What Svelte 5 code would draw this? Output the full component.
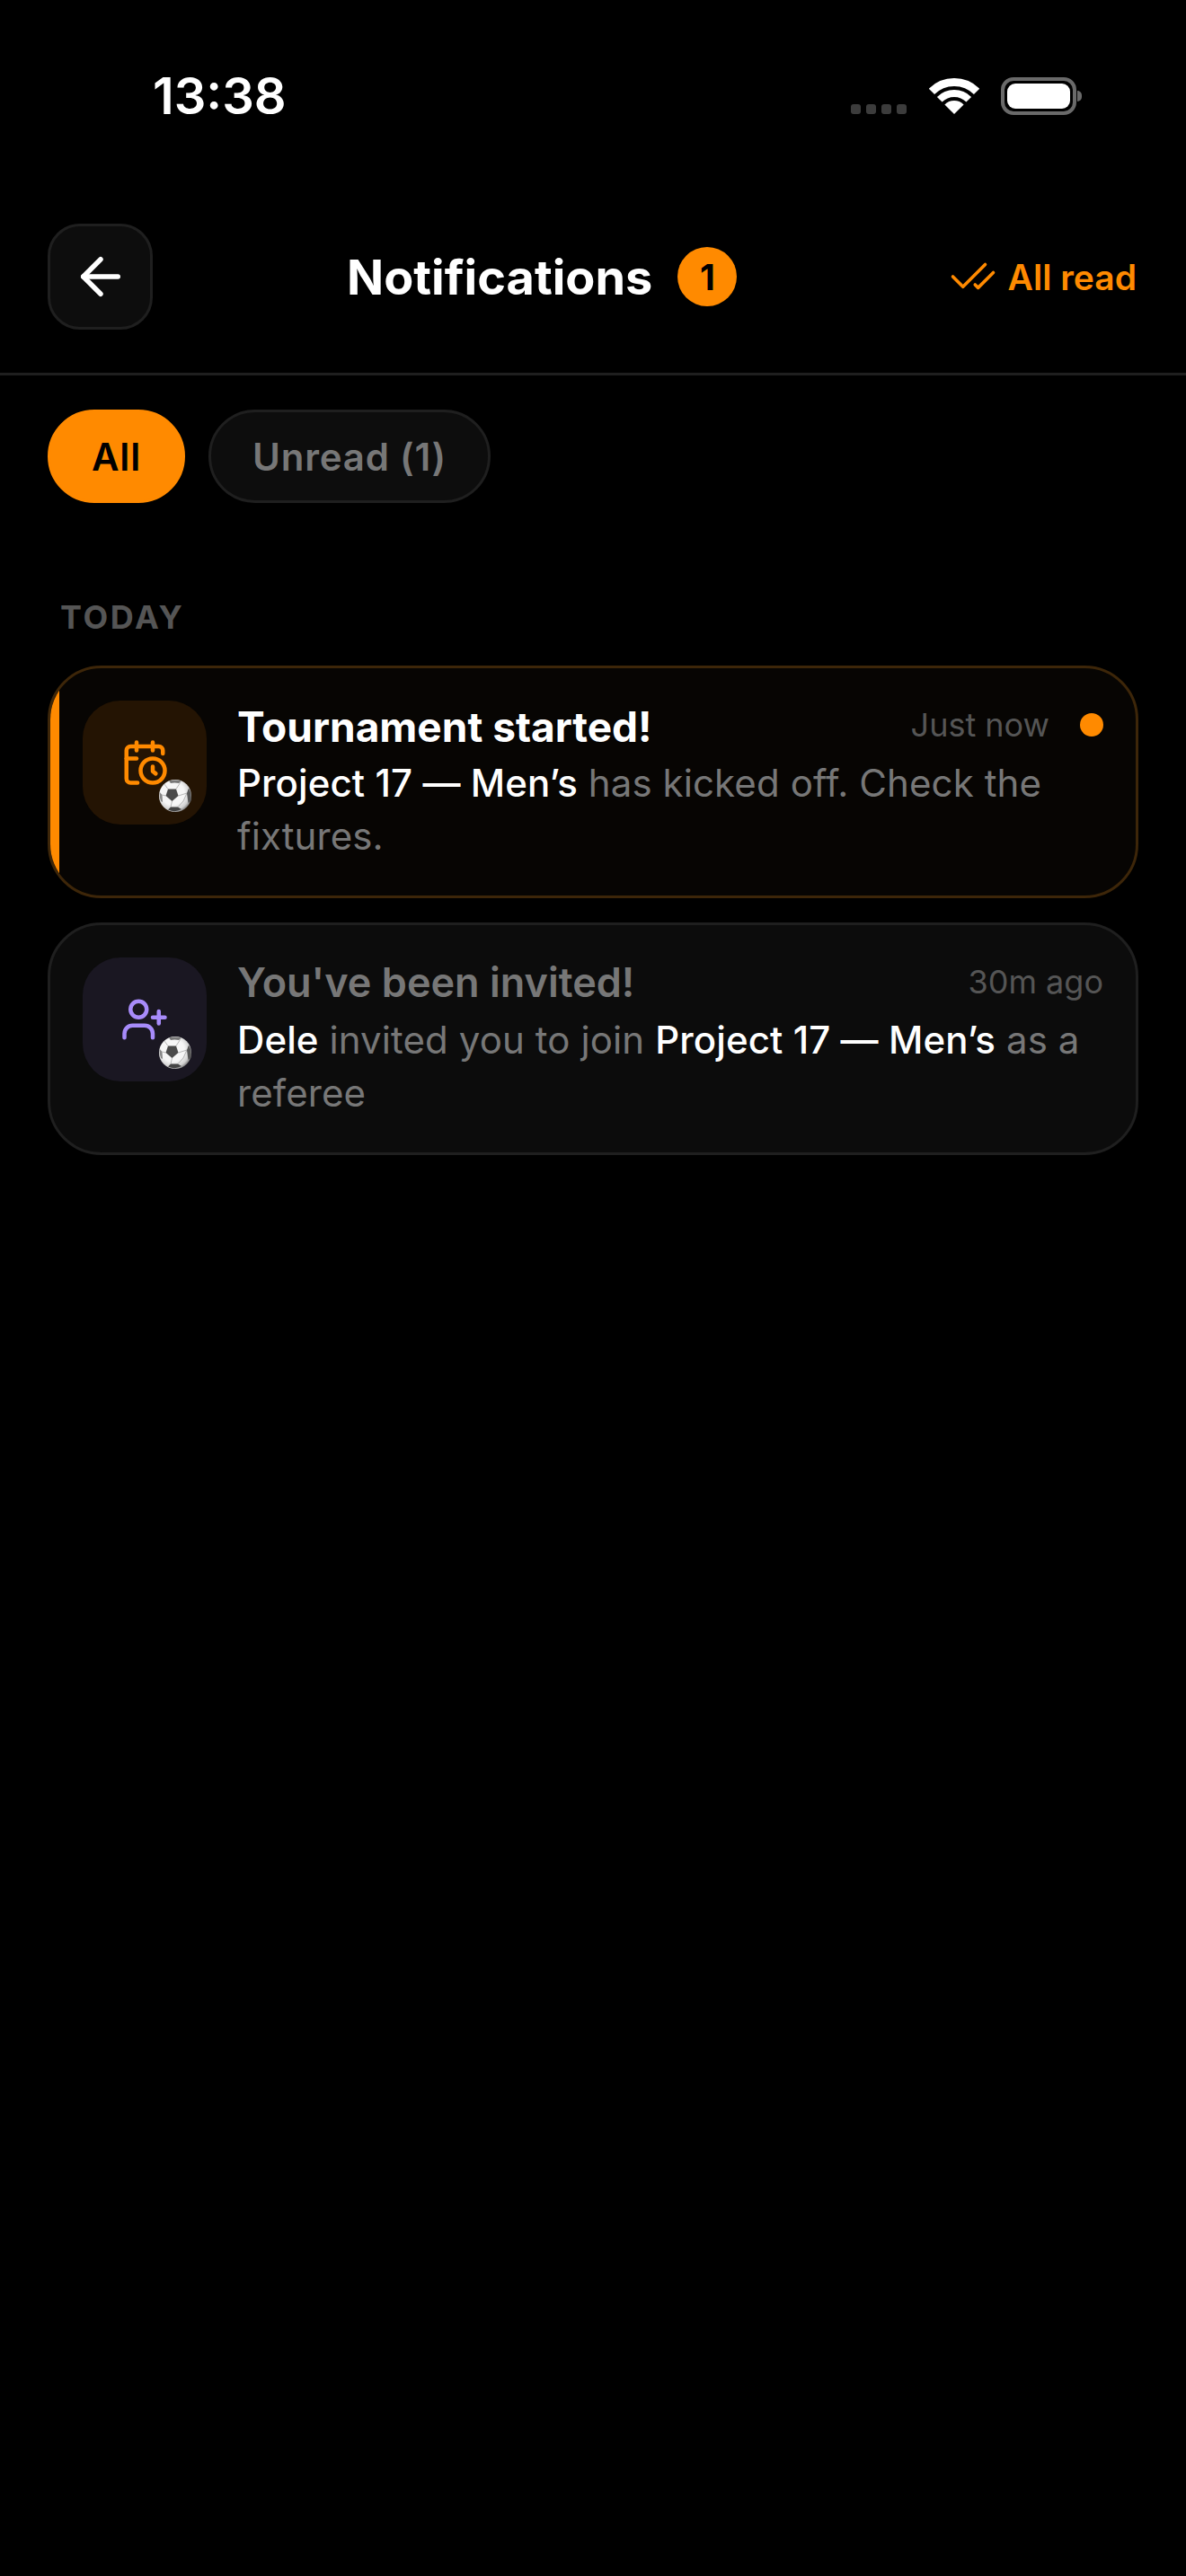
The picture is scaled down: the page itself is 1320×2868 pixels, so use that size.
<script lang="ts">
	const notifications = [
		{
			id: 'started',
			unread: true,
			title: 'Tournament started!',
			time: 'Just now',
			icon: 'calendar',
			body: [
				{ text: 'Project 17 — Men’s', strong: true },
				{ text: ' has kicked off. Check the fixtures.', strong: false }
			]
		},
		{
			id: 'invited',
			unread: false,
			title: "You've been invited!",
			time: '30m ago',
			icon: 'user',
			body: [
				{ text: 'Dele', strong: true },
				{ text: ' invited you to join ', strong: false },
				{ text: 'Project 17 — Men’s', strong: true },
				{ text: ' as a referee', strong: false }
			]
		}
	];
</script>

<div class="screen">
	<div class="status">
		<span class="clock">13:38</span>
		<div class="status-icons">
			<div class="signal">
				<i></i><i></i><i></i><i></i>
			</div>
			<svg class="wifi" width="56" height="40" viewBox="0 0 56 40" fill="none" aria-hidden="true">
				<path d="M28 40 17.400 29.400A15 15 0 0 1 38.600 29.400Z" fill="#fff" />
				<path d="M11.740 23.740A23 23 0 0 1 44.260 23.740" stroke="#fff" stroke-width="8" />
				<path d="M2.900 14.900A35.500 35.500 0 0 1 53.100 14.900" stroke="#fff" stroke-width="9" />
			</svg>
			<div class="battery">
				<div class="battery-fill"></div>
			</div>
			<div class="battery-tip"></div>
		</div>
	</div>

	<header class="topbar">
		<button class="back" aria-label="Back">
			<svg width="66" height="66" viewBox="0 0 24 24" fill="none" stroke="#fff" stroke-width="2" stroke-linecap="round" stroke-linejoin="round">
				<path d="m12 19-7-7 7-7" />
				<path d="M19 12H5" />
			</svg>
		</button>
		<div class="title-wrap">
			<h1>Notifications</h1>
			<span class="count">1</span>
		</div>
		<button class="read-all">
			<svg width="54" height="54" viewBox="0 0 24 24" fill="none" stroke="#ff8a00" stroke-width="1.600" stroke-linecap="round" stroke-linejoin="round">
				<path d="M18 6 7 17l-5-5" />
				<path d="m22 10-7.500 7.500L13 16" />
			</svg>
			All read
		</button>
	</header>

	<div class="chips">
		<button class="chip active">All</button>
		<button class="chip">Unread (1)</button>
	</div>

	<h2 class="section">TODAY</h2>

	<div class="list">
		{#each notifications as n (n.id)}
			<article class="card" class:unread={n.unread}>
				{#if n.unread}
					<span class="accent"></span>
				{/if}
				<div class="icon-box">
					{#if n.icon === 'calendar'}
						<svg width="54" height="54" viewBox="0 0 24 24" fill="none" stroke="#ff8a00" stroke-width="2" stroke-linecap="round" stroke-linejoin="round">
							<path d="M21 7.500V6a2 2 0 0 0-2-2H5a2 2 0 0 0-2 2v14a2 2 0 0 0 2 2h3.500" />
							<path d="M16 2v4" />
							<path d="M8 2v4" />
							<path d="M3 10h5" />
							<path d="M17.500 17.500 16 16.300V14" />
							<circle cx="16" cy="16" r="6" />
						</svg>
					{:else}
						<svg width="54" height="54" viewBox="0 0 24 24" fill="none" stroke="#a78bfa" stroke-width="2" stroke-linecap="round" stroke-linejoin="round">
							<path d="M16 21v-2a4 4 0 0 0-4-4H6a4 4 0 0 0-4 4v2" />
							<circle cx="9" cy="7" r="4" />
							<line x1="19" x2="19" y1="8" y2="14" />
							<line x1="22" x2="16" y1="11" y2="11" />
						</svg>
					{/if}
					<svg class="ball" width="36" height="36" viewBox="0 0 36 36" aria-hidden="true">
						<defs>
							<radialGradient id="ball-{n.id}" cx="0.42" cy="0.42" r="0.6">
								<stop offset="0.6" stop-color="#f6f6f6" />
								<stop offset="0.88" stop-color="#cfcfcf" />
								<stop offset="1" stop-color="#8c8c8c" />
							</radialGradient>
						</defs>
						<circle cx="18" cy="18" r="18" fill="url(#ball-{n.id})" />
						<g stroke="#a8a8a8" stroke-width="0.800" fill="none">
							<path d="M10 10.500 6 5M19 10.500 23.500 3.500M21.500 18 31 15M14.500 24 13 30.500M7.500 18 3.500 17M21 30.500 27 24 31 15" />
						</g>
						<path d="M10 10.500 19 10.500 21.500 18 14.500 24 7.500 18Z" fill="#4a4a4a" />
						<path d="M11 1.500Q18-.5 25 1.800L22 4Q17 3 13 4Z" fill="#777" />
						<path d="M33 9.500Q36.500 15 35.500 24L32.500 26 31 15Z" fill="#555" />
						<path d="M.8 14 3.500 17 4 25 2 24Q0 19 .8 14Z" fill="#888" />
						<path d="M10 33.500 13 30.500H21L25 33Q18 37 10 33.500Z" fill="#444" />
					</svg>
				</div>
				<div class="content">
					<div class="row">
						<h3>{n.title}</h3>
						<span class="time">{n.time}</span>
						{#if n.unread}
							<span class="dot"></span>
						{/if}
					</div>
					<p>
						{#each n.body as part}
							{#if part.strong}<strong>{part.text}</strong>{:else}{part.text}{/if}
						{/each}
					</p>
				</div>
			</article>
		{/each}
	</div>
</div>

<style>
	:global(body) {
		margin: 0;
		background: #000;
	}
	.screen {
		min-height: 2868px;
		background: #000;
		font-family: Inter, 'Liberation Sans', sans-serif;
		color: #fff;
		box-sizing: border-box;
	}
	button {
		font-family: inherit;
		cursor: pointer;
	}

	.status {
		display: flex;
		justify-content: space-between;
		height: 249px;
		box-sizing: border-box;
		padding: 74px 116px 0 170px;
	}
	.clock {
		font-size: 56px;
		font-weight: 600;
		line-height: 66px;
		height: 66px;
	}
	.status-icons {
		display: flex;
		align-items: flex-start;
		padding-top: 12px;
	}
	.signal {
		display: flex;
		gap: 6px;
		margin-top: 30px;
		margin-right: 25px;
	}
	.signal i {
		width: 11px;
		height: 11px;
		border-radius: 3px;
		background: #3c3c3c;
	}
	.wifi {
		margin-top: 1px;
		margin-right: 24px;
	}
	.battery {
		width: 84px;
		height: 42px;
		box-sizing: border-box;
		border: 4px solid #6a6a6a;
		border-radius: 14px;
		padding: 3px;
	}
	.battery-fill {
		height: 100%;
		background: #fff;
		border-radius: 9px;
	}
	.battery-tip {
		width: 5px;
		height: 12px;
		margin: 15px 0 0 1px;
		background: #6a6a6a;
		border-radius: 0 5px 5px 0;
	}

	.topbar {
		display: flex;
		align-items: center;
		padding: 0 55px 48px 53px;
		border-bottom: 3px solid #1f1f1f;
	}
	.back {
		width: 117px;
		height: 118px;
		padding: 0;
		display: flex;
		align-items: center;
		justify-content: center;
		background: #0d0d0d;
		border: 3px solid #1f1f1f;
		border-radius: 36px;
	}
	.title-wrap {
		display: flex;
		align-items: center;
		gap: 28px;
		margin-left: 216px;
	}
	h1 {
		margin: 0;
		font-size: 54px;
		font-weight: 700;
	}
	.count {
		width: 66px;
		height: 66px;
		border-radius: 50%;
		background: #ff8a00;
		color: #000;
		font-size: 39px;
		font-weight: 700;
		display: flex;
		align-items: center;
		justify-content: center;
	}
	.read-all {
		margin-left: auto;
		display: flex;
		align-items: center;
		gap: 12px;
		padding: 0;
		background: none;
		border: none;
		color: #ff8a00;
		font-size: 39px;
		font-weight: 600;
	}

	.chips {
		display: flex;
		gap: 26px;
		padding: 38px 53px 0;
	}
	.chip {
		height: 104px;
		padding: 0 46px;
		border-radius: 52px;
		background: #0d0d0d;
		border: 3px solid #1f1f1f;
		color: #777;
		font-size: 42px;
		font-weight: 600;
		letter-spacing: 0.8px;
	}
	.chip.active {
		background: #ff8a00;
		border-color: #ff8a00;
		color: #000;
	}

	.section {
		margin: 0;
		padding: 105px 67px 0;
		font-size: 36px;
		font-weight: 700;
		letter-spacing: 2.600px;
		line-height: 44px;
		color: #555;
	}

	.list {
		display: flex;
		flex-direction: column;
		gap: 27px;
		padding: 32px 53px 0;
	}
	.card {
		position: relative;
		overflow: hidden;
		display: flex;
		gap: 34px;
		height: 259px;
		box-sizing: border-box;
		padding: 36px;
		background: #0c0c0c;
		border: 3px solid #1f1f1f;
		border-radius: 60px;
	}
	.card.unread {
		background: #070503;
		border-color: #3d2609;
	}
	.accent {
		position: absolute;
		left: 0;
		top: 0;
		bottom: 0;
		width: 10px;
		background: #ff8a00;
	}
	.icon-box {
		position: relative;
		flex: none;
		width: 138px;
		height: 138px;
		border-radius: 42px;
		background: #1a1722;
		display: flex;
		align-items: center;
		justify-content: center;
	}
	.unread .icon-box {
		background: #241403;
	}
	.ball {
		position: absolute;
		right: 17px;
		bottom: 14px;
	}
	.content {
		flex: 1;
		min-width: 0;
	}
	.row {
		display: flex;
		align-items: center;
		height: 54px;
	}
	h3 {
		margin: 0;
		flex: 1;
		font-size: 45px;
		font-weight: 600;
		color: #777;
	}
	.unread h3 {
		margin-top: 3px;
		font-size: 46px;
		font-weight: 700;
		color: #fff;
	}
	.time {
		font-size: 36px;
		color: #555;
	}
	.dot {
		width: 26px;
		height: 26px;
		margin-left: 34px;
		border-radius: 50%;
		background: #ff8a00;
	}
	p {
		margin: 8px 0 0;
		font-size: 42px;
		line-height: 59px;
		letter-spacing: 0.1px;
		color: #777;
	}
	strong {
		font-weight: 500;
		color: #fff;
	}
</style>
